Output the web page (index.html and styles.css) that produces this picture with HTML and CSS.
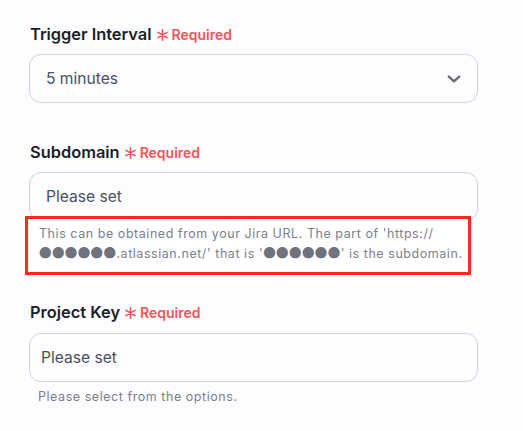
FILE: index.html
```html
<!DOCTYPE html>
<html lang="en">
<head>
<meta charset="utf-8">
<link rel="stylesheet" href="styles.css">
</head>
<body>
<form class="form">
  <div class="field">
    <div class="label"><span class="label-text">Trigger Interval</span><span class="req"><svg class="star" width="11" height="12" viewBox="0 0 11 12"><path d="M5.5 0.8 V11.2 M1 3.4 L10 8.6 M1 8.6 L10 3.4" stroke="#f0555a" stroke-width="1.6" stroke-linecap="round"/></svg>Required</span></div>
    <div class="control select">
      <span class="value">5 minutes</span>
      <svg class="chev" width="14" height="8" viewBox="0 0 14 8"><path d="M1.8 1.6 L7 6.4 L12.2 1.6" fill="none" stroke="#6b6e76" stroke-width="2.4" stroke-linecap="round" stroke-linejoin="round"/></svg>
    </div>
  </div>

  <div class="field">
    <div class="label"><span class="label-text">Subdomain</span><span class="req"><svg class="star" width="11" height="12" viewBox="0 0 11 12"><path d="M5.5 0.8 V11.2 M1 3.4 L10 8.6 M1 8.6 L10 3.4" stroke="#f0555a" stroke-width="1.6" stroke-linecap="round"/></svg>Required</span></div>
    <div class="control">
      <span class="value">Please set</span>
    </div>
    <p class="hint hint-marked">This can be obtained from your Jira URL. The part of 'https://<br><span class="dots">●●●●●●</span>.atlassian.net/' that is '<span class="dots">●●●●●●</span>' is the subdomain.</p>
  </div>

  <div class="field field-last">
    <div class="label label-last"><span class="label-text">Project Key</span><span class="req"><svg class="star" width="11" height="12" viewBox="0 0 11 12"><path d="M5.5 0.8 V11.2 M1 3.4 L10 8.6 M1 8.6 L10 3.4" stroke="#f0555a" stroke-width="1.6" stroke-linecap="round"/></svg>Required</span></div>
    <div class="control control-tight">
      <span class="value">Please set</span>
    </div>
    <p class="hint">Please select from the options.</p>
  </div>
</form>
</body>
</html>
```

FILE: styles.css
```css
html, body {
  margin: 0;
  padding: 0;
  background: #fdfcfe;
}
body {
  font-family: Inter, "Noto Sans", "Liberation Sans", sans-serif;
  color: #1f2330;
}
.form {
  width: 449px;
  padding: 24px 0 0 29px;
  display: flex;
  flex-direction: column;
}
.field {
  display: flex;
  flex-direction: column;
  margin-bottom: 39px;
}
.field-last { margin-bottom: 0; }
.label {
  display: flex;
  align-items: center;
  height: 20px;
  margin-bottom: 10px;
  padding-left: 1px;
}
.label-last { margin-bottom: 11px; }
.label-text {
  font-size: 16.4px;
  font-weight: 600;
  color: #1c1f2a;
}
.req {
  display: flex;
  align-items: center;
  margin-left: 5px;
  font-size: 14px;
  font-weight: 600;
  color: #f0555a;
}
.star {
  margin-right: 4px;
  margin-top: 1px;
}
.control {
  box-sizing: border-box;
  height: 49px;
  border: 1px solid #d0d2db;
  border-radius: 12px;
  background: #fdfcfe;
  display: flex;
  align-items: center;
  padding: 0 16px;
}
.control-tight { padding-left: 11px; }
.value {
  flex: 1;
  font-size: 15.6px;
  color: #4a5061;
}
.hint {
  margin: 5px 0 0 9px;
  font-size: 12.5px;
  line-height: 19px;
  letter-spacing: 0.55px;
  color: #7b808c;
}
.hint-marked {
  position: relative;
  margin: -5px 0 -12px -4px;
  width: 446px;
  box-sizing: border-box;
  padding: 5px 0 9px 11px;
  border: 3px solid #f62b1d;
  background: #ffffff;
}
.dots {
  font-family: "Noto Sans CJK JP", sans-serif;
  color: #70737d;
  letter-spacing: 0.4px;
}
```
